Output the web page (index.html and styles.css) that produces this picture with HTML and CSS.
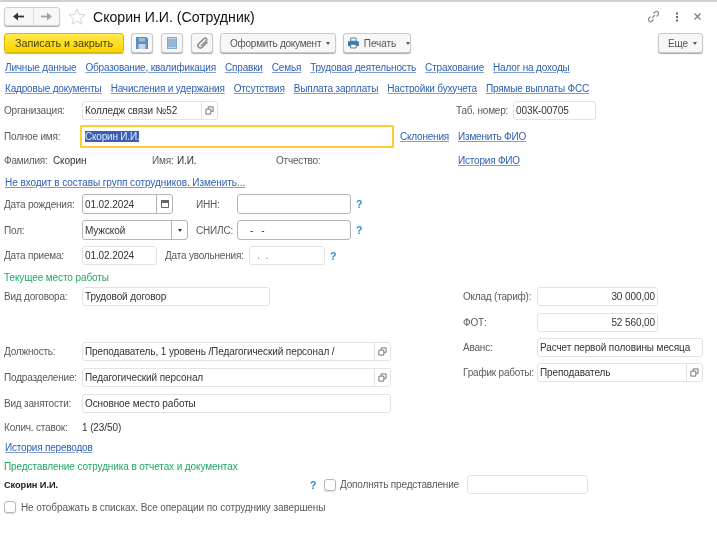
FILE: index.html
```html
<!DOCTYPE html>
<html lang="ru">
<head>
<meta charset="utf-8">
<title>Скорин И.И. (Сотрудник)</title>
<link rel="stylesheet" href="styles.css">
</head>
<body>
<svg width="0" height="0" class="defs">
  <symbol id="copy" viewBox="0 0 10 10"><path d="M3.500 3V1h5.500v5H7M1 3.500h5.500v5.500H1z" fill="none" stroke="#666" stroke-width="1"/></symbol>
</svg>
<div class="page">
  <div class="tabstrip"></div>
  <header class="head">
    <div class="nav">
      <button class="navbtn"><svg width="11" height="9" viewBox="0 0 11 9"><path d="M11 4.500H3" stroke="#333" stroke-width="1.800"/><path d="M5 .5v8L0 4.500z" fill="#333"/></svg></button>
      <button class="navbtn"><svg width="11" height="9" viewBox="0 0 11 9"><path d="M0 4.500h8" stroke="#a5a5a5" stroke-width="1.800"/><path d="M6 .5v8l5-4z" fill="#a5a5a5"/></svg></button>
    </div>
    <svg class="star" width="18" height="17" viewBox="0 0 18 17"><path d="M9 1l2.200 5.500 5.800.4-4.500 3.700 1.500 5.700L9 13.200l-5 3.100 1.500-5.700L1 6.900l5.800-.4z" fill="#fff" stroke="#d6d6d6"/></svg>
    <h1 class="title">Скорин И.И. (Сотрудник)</h1>
    <div class="winicons">
      <svg width="13" height="13" viewBox="0 0 13 13"><path d="M5 8l3-3M6.500 3.500 8 2a2.100 2.100 0 0 1 3 3L9.500 6.500M6.500 9.500 5 11a2.100 2.100 0 0 1-3-3l1.500-1.500" fill="none" stroke="#8a8a8a" stroke-width="1.100"/></svg>
      <svg width="4" height="10" viewBox="0 0 4 10"><path d="M1 .5h2v2H1zM1 4h2v2H1zM1 7.500h2v2H1z" fill="#666"/></svg>
      <svg width="7" height="7" viewBox="0 0 7 7"><path d="M.5.5l6 6M6.500.5l-6 6" stroke="#777" stroke-width="1.100"/></svg>
    </div>
  </header>
  <div class="toolbar">
    <button class="btn primary">Записать и закрыть</button>
    <button class="btn icon"><svg width="12" height="12" viewBox="0 0 12 12"><path d="M0 0h10.500L12 1.500V12H0z" fill="#5b8fc0"/><path d="M3 1h6v3.500H3z" fill="#9fbcd8"/><path d="M2.500 7h7v5h-7z" fill="#c3d5e6"/></svg></button>
    <button class="btn icon"><svg width="10" height="12" viewBox="0 0 10 12"><path d="M.5.5h9v11h-9z" fill="#bcd3e8" stroke="#84a9cb"/><path d="M1 3h8M1 5h8M1 7h8M1 9h8" stroke="#6f9bc4"/></svg></button>
    <button class="btn icon"><svg width="13" height="13" viewBox="0 0 13 13"><path d="M11.500 5 6 10.500a2.500 2.500 0 0 1-3.500-3.500L8 1.500a1.600 1.600 0 0 1 2.300 2.300L5 9" fill="none" stroke="#8a8a8a" stroke-width="1.500"/></svg></button>
    <button class="btn menu doc">Оформить документ<span class="caret"></span></button>
    <button class="btn menu print"><svg width="12" height="12" viewBox="0 0 12 12"><path d="M3 .5h6v3.500H3z" fill="#fff" stroke="#3f78ab"/><path d="M0 4h12v5.500H0z" fill="#3f78ab"/><path d="M3 7.500h6v4H3z" fill="#fff" stroke="#3f78ab"/></svg>Печать<span class="caret"></span></button>
    <button class="btn menu more">Еще<span class="caret"></span></button>
  </div>
  <nav class="links first">
    <a>Личные данные</a><a>Образование, квалификация</a><a>Справки</a><a>Семья</a><a>Трудовая деятельность</a><a>Страхование</a><a>Налог на доходы</a>
  </nav>
  <nav class="links second">
    <a>Кадровые документы</a><a>Начисления и удержания</a><a>Отсутствия</a><a>Выплата зарплаты</a><a>Настройки бухучета</a><a>Прямые выплаты ФСС</a>
  </nav>

  <div class="row r-org">
    <label class="lab">Организация:</label>
    <div class="field w-org"><span class="val">Колледж связи №52</span><span class="addon"><svg><use href="#copy"/></svg></span></div>
    <label class="lab tab">Таб. номер:</label>
    <div class="field w-tab"><span class="val">003К-00705</span></div>
  </div>
  <div class="row r-name">
    <label class="lab">Полное имя:</label>
    <div class="field focus"><span class="val"><mark>Скорин И.И.</mark></span></div>
    <a class="link l-decl">Склонения</a><a class="link l-change">Изменить ФИО</a>
  </div>
  <div class="row r-fio">
    <span class="lab fam">Фамилия:</span><span class="plain sur">Скорин</span>
    <span class="lab imya">Имя:</span><span class="plain nm">И.И.</span>
    <span class="lab otch">Отчество:</span>
    <a class="link">История ФИО</a>
  </div>
  <div class="row r-group"><a class="link">Не входит в составы групп сотрудников. Изменить...</a></div>

  <div class="row r-dob">
    <label class="lab">Дата рождения:</label>
    <div class="field dark w-dob"><span class="val">01.02.2024</span><span class="addon"><svg width="8" height="8" viewBox="0 0 8 8"><path d="M.5.5h7v7h-7z" fill="#fff" stroke="#666"/><path d="M0 0h8v3H0z" fill="#666"/></svg></span></div>
    <label class="lab inn">ИНН:</label>
    <div class="field dark w-inn"></div><span class="q">?</span>
  </div>
  <div class="row r-sex">
    <label class="lab">Пол:</label>
    <div class="field dark w-sex"><span class="val">Мужской</span><span class="addon"><span class="caret flat"></span></span></div>
    <label class="lab snils">СНИЛС:</label>
    <div class="field dark w-inn"><span class="val mask">&nbsp;&nbsp;&nbsp;-&nbsp;&nbsp;&nbsp;-</span></div><span class="q">?</span>
  </div>
  <div class="row r-hire">
    <label class="lab">Дата приема:</label>
    <div class="field w-hire"><span class="val">01.02.2024</span></div>
    <label class="lab fire">Дата увольнения:</label>
    <div class="field w-fire"><span class="val muted">&nbsp;&nbsp;.&nbsp;&nbsp;.</span></div><span class="q">?</span>
  </div>
  <div class="green g1">Текущее место работы</div>

  <div class="work">
    <div class="work-left">
      <div class="row"><label class="lab">Вид договора:</label><div class="field w-contract"><span class="val">Трудовой договор</span></div></div>
      <div class="row pos"><label class="lab">Должность:</label><div class="field w-wide"><span class="val">Преподаватель, 1 уровень /Педагогический персонал /</span><span class="addon"><svg><use href="#copy"/></svg></span></div></div>
      <div class="row gap7"><label class="lab">Подразделение:</label><div class="field w-wide"><span class="val">Педагогический персонал</span><span class="addon"><svg><use href="#copy"/></svg></span></div></div>
      <div class="row gap7"><label class="lab">Вид занятости:</label><div class="field w-wide"><span class="val">Основное место работы</span></div></div>
    </div>
    <div class="work-right">
      <div class="row"><label class="lab rl">Оклад (тариф):</label><div class="field w-sum"><span class="val num">30 000,00</span></div></div>
      <div class="row gap7"><label class="lab rl">ФОТ:</label><div class="field w-sum"><span class="val num">52 560,00</span></div></div>
      <div class="row gap6"><label class="lab rl">Аванс:</label><div class="field w-adv"><span class="val">Расчет первой половины месяца</span></div></div>
      <div class="row gap6"><label class="lab rl">График работы:</label><div class="field w-adv"><span class="val">Преподаватель</span><span class="addon"><svg><use href="#copy"/></svg></span></div></div>
    </div>
  </div>

  <div class="row r-rate"><span class="lab">Колич. ставок:</span><span class="plain">1 (23/50)</span></div>
  <div class="row r-hist"><a class="link">История переводов</a></div>
  <div class="green g2">Представление сотрудника в отчетах и документах</div>
  <div class="row r-repr">
    <b class="repr">Скорин И.И.</b>
    <span class="q q3">?</span>
    <span class="check"></span>
    <label class="lab add">Дополнять представление</label>
    <div class="field w-add"></div>
  </div>
  <div class="row r-hide"><span class="check"></span><label class="lab hide">Не отображать в списках. Все операции по сотруднику завершены</label></div>
</div>
</body>
</html>
```
FILE: styles.css
```css
* { box-sizing: border-box; }
html, body { margin: 0; padding: 0; background: #fff; }
body { width: 717px; height: 541px; overflow: hidden; font-family: "Liberation Sans", Arial, sans-serif; font-size: 10px; letter-spacing: -0.1px; color: #333; }
.defs { display: block; height: 0; }
.page { filter: blur(0.45px); }
.tabstrip { height: 2px; background: #cfcfcf; }
.head { height: 28px; padding: 1px 0 0 4px; display: flex; align-items: center; }
.nav { display: flex; width: 56px; height: 19px; border: 1px solid #cfcfcf; border-radius: 3px; box-shadow: 0 1px 1px #aaa; background: #f7f7f7; }
.navbtn { width: 27.500px; flex: none; border: 0; background: none; padding: 0; display: flex; align-items: center; justify-content: center; }
.navbtn + .navbtn { border-left: 1px solid #ddd; }
.star { margin-left: 8px; }
.title { margin: 0 0 0 7px; font-size: 14.100px; font-weight: 400; letter-spacing: 0; color: #111; }
.winicons { margin-left: auto; margin-right: 16px; display: flex; align-items: center; gap: 15px; }
.toolbar { display: flex; height: 20px; margin-top: 3px; padding-left: 4px; }
.btn { font: inherit; letter-spacing: -0.1px; color: #555; height: 20px; padding: 0; background: #f7f7f7; border: 1px solid #cacaca; border-radius: 3px; box-shadow: 0 1px 1px #aaa; display: flex; align-items: center; white-space: nowrap; flex: none; }
.primary { width: 120px; justify-content: center; background: linear-gradient(#ffe94d, #fad400); border-color: #dcbc00; color: #4a4000; font-size: 10.800px; letter-spacing: 0; margin-right: 7px; }
.icon { width: 22px; margin-right: 8px; justify-content: center; }
.doc { width: 116px; margin-left: -1px; margin-right: 7px; padding-left: 9px; letter-spacing: -0.25px; }
.print { width: 68px; gap: 5px; padding-left: 4px; }
.more { margin-left: auto; width: 45px; margin-right: 14px; padding-left: 9px; }
.caret { display: inline-block; margin-left: 5px; width: 0; height: 0; border-left: 2.500px solid transparent; border-right: 2.500px solid transparent; border-top: 3px solid #555; }
.caret.flat { margin-left: 0; border-top-color: #333; }
.links { display: flex; padding-left: 5px; gap: 9px; height: 14px; align-items: center; letter-spacing: -0.17px; }
.links a, .link { color: #2f60b5; text-decoration: underline; white-space: nowrap; text-decoration-color: #7d9fd6; }
.link { letter-spacing: -0.2px; }
.first { margin-top: 7px; }
.second { margin-top: 7px; }
.row { display: flex; align-items: center; padding-left: 4px; }
.lab { width: 78px; flex: none; color: #5a5a5a; white-space: nowrap; letter-spacing: -0.2px; }
.field { height: 19px; border: 1px solid #e3e3e3; border-radius: 3px; display: flex; align-items: center; background: #fff; flex: none; }
.field.dark { border-color: #b5b5b5; }
.val { padding-left: 2px; flex: 1; color: #333; white-space: nowrap; overflow: hidden; }
.num { text-align: right; padding-right: 2px; }
.muted { color: #777; }
.mask { padding-left: 4px; }
.addon { width: 16px; height: 100%; border-left: 1px solid #e3e3e3; display: flex; align-items: center; justify-content: center; flex: none; }
.dark .addon { border-left-color: #b5b5b5; }
.addon svg:not([width]) { width: 9px; height: 9px; }
.r-org { margin-top: 6px; height: 19px; }
.w-org { width: 136px; }
.tab { margin-left: 238px; width: 57px; }
.w-tab { width: 83px; }
.r-name { margin-top: 5px; height: 23px; }
.focus { width: 314px; height: 23px; border: 2px solid #fbcf33; border-radius: 1px; margin-left: -2px; }
.focus .val { padding-left: 3px; }
mark { background: #3d5fb0; color: #dfe8ff; letter-spacing: -0.2px; }
.l-decl { margin-left: 6px; }
.l-change { margin-left: 9px; }
.r-fio { margin-top: 5px; height: 14px; }
.fam { width: 49px; }
.sur { width: 99px; flex: none; }
.imya { width: 25px; }
.nm { width: 99px; flex: none; }
.otch { width: 182px; }
.plain { color: #333; }
.r-group { margin-top: 8px; height: 14px; padding-left: 5px; }
.r-group .link { letter-spacing: -0.06px; }
.r-dob { margin-top: 5px; height: 20px; }
.r-dob .field, .r-sex .field { height: 20px; }
.w-dob { width: 91px; }
.inn { margin-left: 23px; width: 41px; }
.snils { margin-left: 8px; width: 41px; }
.w-inn { width: 114px; }
.q { margin-left: 5px; color: #2d8ccc; font-weight: 700; width: 8px; font-size: 10.500px; }
.r-sex { margin-top: 6px; height: 20px; }
.w-sex { width: 106px; }
.r-hire { margin-top: 6px; height: 19px; }
.w-hire { width: 75px; }
.fire { margin-left: 8px; width: 84px; }
.w-fire { width: 76px; }
.green { color: #22a866; padding-left: 4px; height: 14px; line-height: 14px; }
.g1 { margin-top: 6px; }
.work { display: flex; margin-top: 2px; }
.work-left { width: 458px; flex: none; }
.w-contract { width: 188px; }
.pos { margin-top: 36px; }
.gap7 { margin-top: 7px; }
.gap6 { margin-top: 6px; }
.w-wide { width: 309px; }
.work-right { width: 259px; flex: none; }
.work-right .row { padding-left: 5px; }
.rl { width: 74px; }
.w-sum { width: 121px; }
.w-adv { width: 166px; }
.r-rate { margin-top: 7px; height: 14px; }
.r-hist { margin-top: 6px; height: 14px; padding-left: 5px; }
.g2 { margin-top: 6px; }
.r-repr { margin-top: 1px; height: 19px; }
.repr { width: 306px; flex: none; font-size: 9.300px; color: #222; }
.q3 { margin-left: 0; width: 14px; }
.check { width: 12px; height: 12px; border: 1px solid #b8b8b8; border-radius: 3px; background: #fff; flex: none; box-shadow: 0 1px 1px #ddd; }
.add { margin-left: 4px; width: 127px; letter-spacing: -0.17px; }
.w-add { width: 121px; }
.r-hide { margin-top: 6px; height: 14px; }
.hide { margin-left: 5px; width: auto; letter-spacing: -0.1px; }
```
